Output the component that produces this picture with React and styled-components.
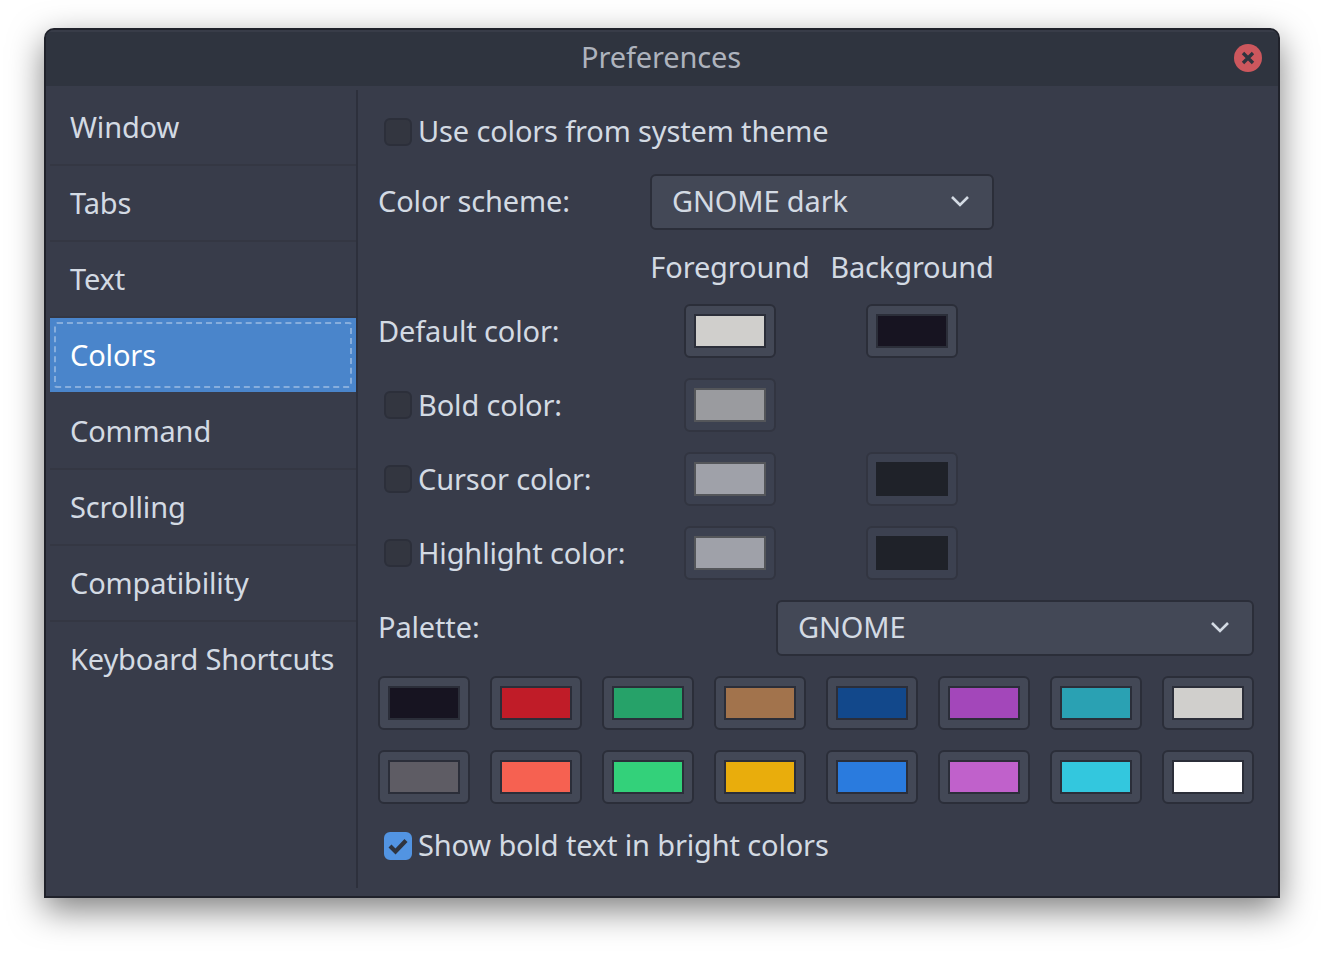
import React from "react"
import styled, { createGlobalStyle } from "styled-components"

const GlobalStyle = createGlobalStyle`
  html, body {
    margin: 0;
    padding: 0;
    background: #fff;
  }
  body {
    font-family: "Noto Sans", "Open Sans", sans-serif;
  }
`

const Page = styled.div`
  width: 1324px;
  height: 958px;
  padding: 28px 44px 60px;
  box-sizing: border-box;
  overflow: hidden;
`

const Window = styled.div`
  height: 870px;
  box-sizing: border-box;
  display: flex;
  flex-direction: column;
  background: #383c4a;
  border: 2px solid #20222b;
  border-radius: 10px 10px 0 0;
  box-shadow: 0 12px 34px rgba(0, 0, 0, 0.5);
  color: #d3dae3;
  font-size: 29px;
  letter-spacing: -0.15px;
  overflow: hidden;
`

const TitleBar = styled.header`
  position: relative;
  height: 56px;
  flex: none;
  box-sizing: border-box;
  padding: 0 2px 4px 0;
  display: flex;
  align-items: center;
  justify-content: center;
  background: #2f343f;
  box-shadow: inset 0 2px 0 #383c48;
  color: #aeb3bd;
`

const CloseButton = styled.button`
  position: absolute;
  right: 16px;
  top: 14px;
  width: 28px;
  height: 28px;
  padding: 0;
  border: none;
  border-radius: 50%;
  background: #cc575d;
  display: flex;
  align-items: center;
  justify-content: center;
`

const Body = styled.div`
  flex: 1;
  display: flex;
  padding: 4px 0 8px 4px;
  min-height: 0;
`

const Sidebar = styled.nav`
  width: 306px;
  flex: none;
`

const SideItem = styled.div`
  position: relative;
  height: 72px;
  box-sizing: content-box;
  display: flex;
  align-items: center;
  padding: 0 0 2px 20px;
  border-bottom: 2px solid ${p => (p.$selected || p.$last ? "transparent" : "#343743")};
  background: ${p => (p.$selected ? "#4a85cb" : "transparent")};
  background-clip: padding-box;
  color: ${p => (p.$selected ? "#ffffff" : "#d3dae3")};
`

const FocusRing = styled.span`
  position: absolute;
  inset: 4px;
  border: 2px dashed rgba(255, 255, 255, 0.34);
  border-radius: 3px;
`

const Content = styled.main`
  flex: 1;
  border-left: 2px solid #2d303c;
  padding: 20px 24px 0 20px;
  display: flex;
  flex-direction: column;
  gap: 20px;
`

const Grid = styled.div`
  display: grid;
  grid-template-columns: 252px 162px 162px;
  grid-template-rows: 44px 56px 34px repeat(4, 54px);
  gap: 20px;
`

const Row = styled.div`
  display: flex;
  align-items: center;
  padding-bottom: ${p => p.$lift || 0}px;
`

const SwatchCell = styled.div`
  display: flex;
  align-items: center;
  justify-content: center;
  padding-right: 2px;
  padding-bottom: ${p => p.$lift || 0}px;
`

const CheckRow = styled.label`
  display: flex;
  align-items: center;
  gap: 6px;
  height: 44px;
  padding-left: 6px;
  grid-column: ${p => p.$span || "auto"};
  ${p => (p.$inGrid ? "align-self: center;" : "")}
`

const CheckText = styled.span`
  padding-bottom: ${p => p.$lift || 2}px;
`

const Box = styled.span`
  width: 28px;
  height: 28px;
  flex: none;
  box-sizing: border-box;
  border-radius: 6px;
  border: 2px solid ${p => (p.$checked ? "#5294e2" : "#2c2f3a")};
  background: ${p => (p.$checked ? "#5294e2" : "#333640")};
  display: flex;
  align-items: center;
  justify-content: center;
`

const Combo = styled.div`
  flex: 1;
  height: 56px;
  box-sizing: border-box;
  display: flex;
  align-items: center;
  justify-content: space-between;
  padding: 0 22px 2px 20px;
  background: #434856;
  border: 2px solid #2b2e39;
  border-radius: 6px;
  grid-column: ${p => p.$span || "auto"};
`

const ComboText = styled.span`
  padding-bottom: 2px;
`

const SwatchButton = styled.div`
  width: 92px;
  height: 54px;
  box-sizing: border-box;
  flex: none;
  display: flex;
  align-items: center;
  justify-content: center;
  background: ${p => (p.$disabled ? "#3c4150" : "#434856")};
  border: 2px solid ${p => (p.$disabled ? "#323541" : "#2b2e39")};
  border-radius: 6px;
`

const SwatchFill = styled.span`
  width: 72px;
  height: 34px;
  box-sizing: border-box;
  background: ${p => p.$color};
  border: 2px solid ${p => p.$edge || "#2b2e39"};
`

const PaletteRow = styled.div`
  display: flex;
  align-items: center;
  gap: 20px;
`

const PaletteLabel = styled.span`
  width: 378px;
  flex: none;
  padding-bottom: 4px;
`

const PaletteGrid = styled.div`
  display: grid;
  grid-template-columns: repeat(8, 92px);
  gap: 20px;
`

const Chevron = () => (
  <svg width="20" height="12" viewBox="0 0 20 12" fill="none" stroke="#d3dae3" strokeWidth="2.6">
    <path d="M2 2l8 8 8-8" />
  </svg>
)

const pages = ["Window", "Tabs", "Text", "Colors", "Command", "Scrolling", "Compatibility", "Keyboard Shortcuts"]

const palette = [
  "#171421", "#c01c28", "#26a269", "#a2734c", "#12488b", "#a347ba", "#2aa1b3", "#d0cfcc",
  "#5e5c64", "#f66151", "#33d17a", "#e9ad0c", "#2a7bde", "#c061cb", "#33c7de", "#ffffff",
]

const Swatch = ({ color, edge, disabled }) => (
  <SwatchButton $disabled={disabled}>
    <SwatchFill $color={color} $edge={edge} />
  </SwatchButton>
)

const App = () => (
  <Page>
    <GlobalStyle />
    <Window>
      <TitleBar>
        Preferences
        <CloseButton aria-label="Close">
          <svg width="14" height="14" viewBox="0 0 14 14" stroke="#2f343f" strokeWidth="3.4">
            <path d="M2 2l10 10M12 2L2 12" />
          </svg>
        </CloseButton>
      </TitleBar>
      <Body>
        <Sidebar>
          {pages.map((name, i) => (
            <SideItem key={name} $selected={name === "Colors"} $last={i === pages.length - 1}>
              {name === "Colors" && <FocusRing />}
              {name}
            </SideItem>
          ))}
        </Sidebar>
        <Content>
          <Grid>
            <CheckRow $inGrid $span="1 / -1">
              <Box />
              <CheckText $lift={4}>Use colors from system theme</CheckText>
            </CheckRow>
            <Row $lift={4}>Color scheme:</Row>
            <Combo $span="2 / 4">
              <ComboText>GNOME dark</ComboText>
              <Chevron />
            </Combo>
            <span />
            <SwatchCell $lift={2}>Foreground</SwatchCell>
            <SwatchCell $lift={2}>Background</SwatchCell>
            <Row $lift={2}>Default color:</Row>
            <SwatchCell><Swatch color="#d0cfcc" /></SwatchCell>
            <SwatchCell><Swatch color="#171421" /></SwatchCell>
            <CheckRow $inGrid><Box /><CheckText>Bold color:</CheckText></CheckRow>
            <SwatchCell><Swatch disabled color="#9a9b9f" edge="#54565a" /></SwatchCell>
            <span />
            <CheckRow $inGrid><Box /><CheckText>Cursor color:</CheckText></CheckRow>
            <SwatchCell><Swatch disabled color="#9fa1a9" edge="#54565a" /></SwatchCell>
            <SwatchCell><Swatch disabled color="#1f2229" edge="#1f2229" /></SwatchCell>
            <CheckRow $inGrid><Box /><CheckText>Highlight color:</CheckText></CheckRow>
            <SwatchCell><Swatch disabled color="#9fa1a9" edge="#54565a" /></SwatchCell>
            <SwatchCell><Swatch disabled color="#1f2229" edge="#1f2229" /></SwatchCell>
          </Grid>
          <PaletteRow>
            <PaletteLabel>Palette:</PaletteLabel>
            <Combo>
              <ComboText>GNOME</ComboText>
              <Chevron />
            </Combo>
          </PaletteRow>
          <PaletteGrid>
            {palette.map(color => <Swatch key={color} color={color} />)}
          </PaletteGrid>
          <CheckRow>
            <Box $checked>
              <svg width="22" height="18" viewBox="0 0 22 18" fill="none" stroke="#2f343f" strokeWidth="4.2">
                <path d="M3 9l5.5 5.5L19 3.5" />
              </svg>
            </Box>
            <CheckText $lift={4}>Show bold text in bright colors</CheckText>
          </CheckRow>
        </Content>
      </Body>
    </Window>
  </Page>
)

export default App
